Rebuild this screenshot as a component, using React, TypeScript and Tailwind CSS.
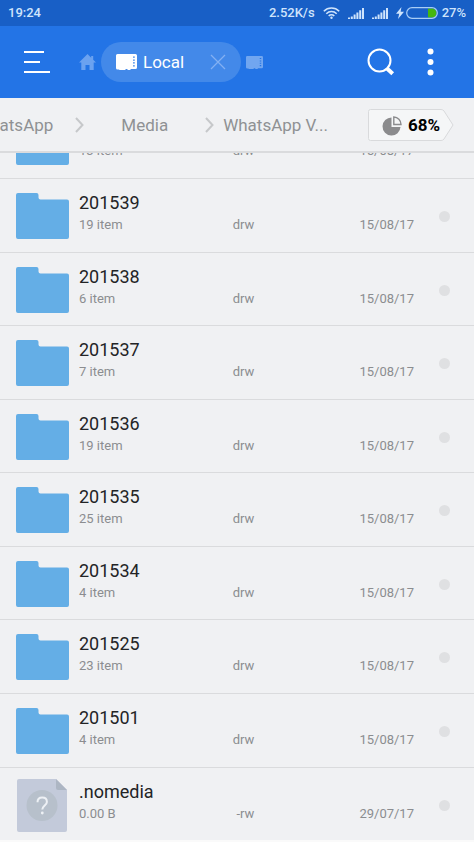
import React from "react";

type Entry = {
  name?: string;
  info: string;
  mode: string;
  date: string;
  kind: "folder" | "file";
};

const clipped: Entry = { info: "13 item", mode: "drw", date: "15/08/17", kind: "folder" };

const entries: Entry[] = [
  { name: "201539", info: "19 item", mode: "drw", date: "15/08/17", kind: "folder" },
  { name: "201538", info: "6 item", mode: "drw", date: "15/08/17", kind: "folder" },
  { name: "201537", info: "7 item", mode: "drw", date: "15/08/17", kind: "folder" },
  { name: "201536", info: "19 item", mode: "drw", date: "15/08/17", kind: "folder" },
  { name: "201535", info: "25 item", mode: "drw", date: "15/08/17", kind: "folder" },
  { name: "201534", info: "4 item", mode: "drw", date: "15/08/17", kind: "folder" },
  { name: "201525", info: "23 item", mode: "drw", date: "15/08/17", kind: "folder" },
  { name: "201501", info: "4 item", mode: "drw", date: "15/08/17", kind: "folder" },
  { name: ".nomedia", info: "0.00 B", mode: "-rw", date: "29/07/17", kind: "file" },
];

function FolderIcon() {
  return (
    <svg className="h-[46px] w-[53px] shrink-0" viewBox="0 0 53 46" aria-hidden="true">
      <path
        fill="#64aee6"
        d="M2 0h18.500q2 0 2 2v2.500q0 2 2 2H51q2 0 2 2V44q0 2-2 2H2q-2 0-2-2V2q0-2 2-2z"
      />
    </svg>
  );
}

function FileIcon() {
  return (
    <svg className="h-[53px] w-[50px] shrink-0" viewBox="0 0 50 53" aria-hidden="true">
      <path fill="#c3cada" d="M2 0h37l11 11v40q0 2-2 2H2q-2 0-2-2V2q0-2 2-2z" />
      <path fill="#adb6c3" d="M39 0l11 11H41q-2 0-2-2z" />
      <circle cx="25" cy="26.500" r="15.500" fill="#b7c0cb" />
      <path
        d="M20.500 23.200c0-2.800 1.900-4.600 4.700-4.600s4.700 1.700 4.700 4.300c0 3.400-4.600 3.900-4.600 7.600"
        fill="none"
        stroke="#eef1f5"
        strokeWidth="2"
      />
      <circle cx="25.300" cy="34" r="1.400" fill="#eef1f5" />
    </svg>
  );
}

function CardIcon({ className }: { className: string }) {
  return (
    <svg className={className} viewBox="0 0 21 16" aria-hidden="true">
      <path
        fill="currentColor"
        fillRule="evenodd"
        d="M1.500 0h18Q21 0 21 1.500v12q0 1.500-1.500 1.500H15l-1 1h-2l-1-1h-1l-1 1H7l-1 .500H4L3 15.500H1.500Q0 15.500 0 14V1.500Q0 0 1.500 0zM17 2.500v1.300h1.800V2.500zM17 5.400v1.300h1.800V5.400zM17 8.300v1.300h1.800V8.300zM17 11.200v1.300h1.800v-1.300z"
      />
    </svg>
  );
}

function WifiIcon() {
  return (
    <svg className="h-3 w-[17px]" viewBox="0 0 17 12" fill="none" stroke="currentColor" strokeWidth="1.600" aria-hidden="true">
      <path d="M.8 4.200a11 11 0 0 1 15.400 0M3.300 6.700a7.400 7.400 0 0 1 10.400 0M5.700 9a4 4 0 0 1 5.600 0" />
      <circle cx="8.500" cy="10.700" r="1.200" fill="currentColor" stroke="none" />
    </svg>
  );
}

function SignalIcon() {
  return (
    <svg className="h-[11px] w-4" viewBox="0 0 16 11" fill="currentColor" aria-hidden="true">
      <path d="M0 9.500h2V11H0zM2.800 8.500h2V11h-2zM5.600 6.500h2V11h-2zM8.400 4.500h2V11h-2zM11.200 2.300h2V11h-2zM14 0h2v11h-2z" />
    </svg>
  );
}

function BatteryIcon() {
  return (
    <span className="flex items-center">
      <svg className="h-3 w-2" viewBox="0 0 8 12" fill="currentColor" aria-hidden="true">
        <path d="M5.500 0L0 6.800h3.200L2 12l6-7.300H4.600z" />
      </svg>
      <svg className="ml-[2px] h-3 w-8" viewBox="0 0 32 12" aria-hidden="true">
        <path fill="#45b70f" d="M22 1.500h4a4.500 4.500 0 0 1 0 9h-4z" />
        <rect x=".700" y=".700" width="30.600" height="10.600" rx="5.300" fill="none" stroke="#a9cdf6" strokeWidth="1.200" />
      </svg>
    </span>
  );
}

function Chevron() {
  return (
    <svg className="h-4 w-[9px] shrink-0" viewBox="0 0 9 16" fill="none" stroke="#c6c8ca" strokeWidth="2" aria-hidden="true">
      <path d="M1 1l6.500 7L1 15" />
    </svg>
  );
}

function Row({ entry }: { entry: Entry }) {
  return (
    <div className="flex min-h-[68px] w-full items-start">
      <div className={entry.kind === "folder" ? "w-[79px] shrink-0 pt-3.5 pl-4" : "w-[79px] shrink-0 pt-[11px] pl-[17px]"}>
        {entry.kind === "folder" ? <FolderIcon /> : <FileIcon />}
      </div>
      <div className="min-w-0 flex-1 pt-3">
        <div className="h-6 text-[18px] leading-6 text-[#232426]">
          {entry.name && <a href="#open">{entry.name}</a>}
        </div>
        <div className="grid grid-cols-3 text-[13px] leading-5 text-[#8b8d90]">
          <span>{entry.info}</span>
          <span className="pr-12 text-right">{entry.mode}</span>
          <span className="text-right">{entry.date}</span>
        </div>
      </div>
      <input
        type="checkbox"
        aria-label={entry.name ?? "Folder"}
        className="mt-8 mr-6 ml-[25px] size-[11px] shrink-0 appearance-none rounded-full bg-[#dfe0e2]"
      />
    </div>
  );
}

export default function App() {
  return (
    <div className="flex min-h-screen flex-col bg-[#f0f1f3] font-['Roboto',sans-serif]">
      <div className="flex h-[26px] items-center justify-between bg-[#185fc6] pr-2 pl-2 text-[13px] font-medium text-[#cfe4fc]">
        <span>19:24</span>
        <div className="flex items-center gap-2">
          <span>2.52K/s</span>
          <WifiIcon />
          <SignalIcon />
          <SignalIcon />
          <BatteryIcon />
          <span className="-ml-1">27%</span>
        </div>
      </div>

      <header className="flex h-[72px] items-center bg-[#2374e6] pl-[23px] text-white">
        <button type="button" aria-label="Menu">
          <svg className="h-6 w-7" viewBox="0 0 28 24" stroke="currentColor" strokeWidth="2" aria-hidden="true">
            <path d="M1 2h20M1 12h16M1 22h26" />
          </svg>
        </button>
        <button type="button" aria-label="Home" className="ml-7 text-[#6ba2f0]">
          <svg className="h-4 w-[17px]" viewBox="0 0 17 16" fill="currentColor" aria-hidden="true">
            <path d="M8.500 0l3.700 3.700V2h2v3.700L17 8.500h-2.300V16H10.500v-5h-4v5H2.300V8.500H0z" />
          </svg>
        </button>
        <div className="ml-[5px] flex h-10 w-[140px] items-center rounded-full bg-[#4389e9] pr-[15px] pl-[15px]">
          <CardIcon className="h-4 w-[21px]" />
          <span className="ml-1.5 text-[17px] leading-6">Local</span>
          <button type="button" aria-label="Close tab" className="ml-auto text-[#83b0f2]">
            <svg className="size-4" viewBox="0 0 16 16" fill="none" stroke="currentColor" strokeWidth="1.300" aria-hidden="true">
              <path d="M1 1l14 14M15 1L1 15" />
            </svg>
          </button>
        </div>
        <button type="button" aria-label="Next tab" className="ml-[5px] text-[#71a6f0]">
          <CardIcon className="h-[13px] w-[17px]" />
        </button>
        <button type="button" aria-label="Search" className="ml-auto">
          <svg className="size-7" viewBox="0 0 28 28" fill="none" stroke="currentColor" aria-hidden="true">
            <circle cx="12.500" cy="12.500" r="11" strokeWidth="2" />
            <path d="M19.500 20l6.200 5.700" strokeWidth="4" />
          </svg>
        </button>
        <button type="button" aria-label="More" className="mr-10 ml-8">
          <svg className="h-7 w-[7px]" viewBox="0 0 7 28" fill="currentColor" aria-hidden="true">
            <circle cx="3.500" cy="3.500" r="3" />
            <circle cx="3.500" cy="14" r="3" />
            <circle cx="3.500" cy="24.500" r="3" />
          </svg>
        </button>
      </header>

      <div className="flex h-[55px] items-center border-b-2 border-[#dadbdd]">
        <nav aria-label="Path" className="flex min-w-0 flex-1 items-center justify-end overflow-hidden pr-10 text-[17px] leading-6 whitespace-nowrap text-[#8f9194]">
          <a href="#whatsapp" className="mr-[22px]">WhatsApp</a>
          <Chevron />
          <a href="#media" className="mx-[37px]">Media</a>
          <Chevron />
          <a href="#video" className="ml-[9px]">WhatsApp V...</a>
        </nav>
        <button type="button" className="relative mr-5 flex h-8 w-[86px] items-center pt-0.5 pl-3.5 text-[17px] font-bold text-black">
          <svg className="absolute inset-0 size-full" viewBox="0 0 86 32" aria-hidden="true">
            <path d="M2.500.500H73q2 0 3 1.500l9 14-9 14q-1 1.500-3 1.500H2.500q-2 0-2-2v-27q0-2 2-2z" fill="#f5f6f7" stroke="#d9dadc" />
          </svg>
          <svg className="relative size-5" viewBox="0 0 20 20" aria-hidden="true">
            <path d="M9.500 1.500A9 9 0 1 0 18.500 11h-9z" fill="#8b8b8d" />
            <path d="M11.800 1v7.500h7.200a7.500 7.500 0 0 0-7.200-7.500z" fill="none" stroke="#8b8b8d" strokeWidth="1.400" />
          </svg>
          <span className="relative ml-1.5">68%</span>
        </button>
      </div>

      <ul className="flex flex-1 flex-col">
        <li className="flex h-[26px] items-end overflow-hidden border-b border-[#dadbdd]">
          <div className="flex h-[73px] w-full shrink-0">
            <Row entry={clipped} />
          </div>
        </li>
        {entries.map((entry) => (
          <li key={entry.name} className="flex flex-1 border-b border-[#dadbdd] last:border-b-2 last:border-[#fafafa]">
            <Row entry={entry} />
          </li>
        ))}
      </ul>
    </div>
  );
}
